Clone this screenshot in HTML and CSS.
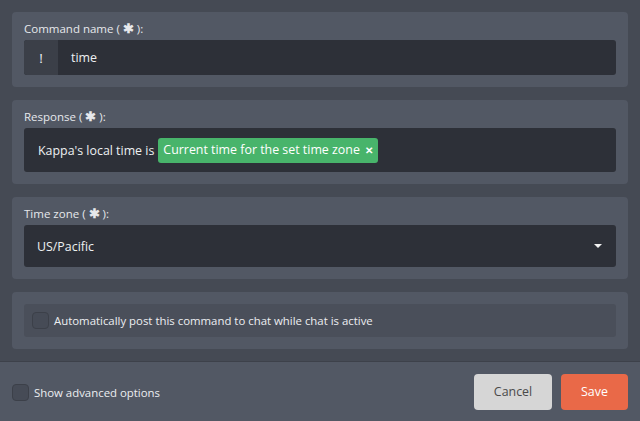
FILE: index.html
```html
<!DOCTYPE html>
<html lang="en">
<head>
  <meta charset="UTF-8" />
  <title>Edit command</title>
  <link rel="stylesheet" href="styles.css">
</head>
<body>

  <!-- FORM -->
  <div class="content">
    <div class="panel">
      <div class="label">Command name ( <span class="req">✱</span> ):</div>
      <div class="input">
        <span class="prefix">!</span>
        <span class="value">time</span>
      </div>
    </div>

    <div class="panel">
      <div class="label">Response ( <span class="req">✱</span> ):</div>
      <div class="input input-tall">
        <span class="value">Kappa's local time is</span>
        <span class="tag">Current time for the set time zone <span class="tag-x">✕</span></span>
      </div>
    </div>

    <div class="panel">
      <div class="label">Time zone ( <span class="req">✱</span> ):</div>
      <div class="input input-select">
        <span class="value">US/Pacific</span>
        <span class="caret"></span>
      </div>
    </div>

    <div class="panel">
      <label class="check-row">
        <span class="checkbox"></span>
        Automatically post this command to chat while chat is active
      </label>
    </div>
  </div>

  <!-- FOOTER -->
  <footer>
    <label class="advanced">
      <span class="checkbox"></span>
      Show advanced options
    </label>
    <div class="buttons">
      <button class="btn btn-cancel">Cancel</button>
      <button class="btn btn-save">Save</button>
    </div>
  </footer>

</body>
</html>
```

FILE: styles.css
```css
* {
  box-sizing: border-box;
}

html, body {
  margin: 0;
  padding: 0;
  height: 100%;
}

body {
  font-family: "Open Sans", "Noto Sans", sans-serif;
  font-size: 12.4px;
  color: #eceef1;
  background: #454a54;
  display: flex;
  flex-direction: column;
}

/* FORM */
.content {
  padding: 12px 12px 0;
  display: flex;
  flex-direction: column;
  gap: 13px;
  flex: 1;
}

.panel {
  background: #525864;
  border-radius: 4px;
  padding: 8px 12px 12px;
}

.label {
  font-size: 11.5px;
  height: 18px;
  line-height: 18px;
  margin-bottom: 2px;
  color: #e6e8ec;
}

.req {
  font-size: 12.5px;
  line-height: 1;
  font-weight: bold;
}

.input {
  display: flex;
  align-items: center;
  height: 35px;
  background: #2d3038;
  border-radius: 3px;
  overflow: hidden;
}

.prefix {
  width: 34px;
  height: 100%;
  display: flex;
  align-items: center;
  justify-content: center;
  background: #3b3f48;
  font-size: 13.5px;
}

.value {
  padding-left: 13px;
  color: #eef0f2;
}

.input-tall {
  height: 44px;
  padding-left: 1px;
}

.tag {
  margin-left: 4px;
  background: #48b46b;
  color: #fff;
  border-radius: 3px;
  padding: 3px 5px 4px 5px;
  line-height: 18px;
}

.tag-x {
  font-size: 10px;
  font-weight: bold;
  margin-left: 2px;
}

.input-select {
  height: 42px;
  justify-content: space-between;
  padding-right: 14px;
}

.caret {
  width: 0;
  height: 0;
  border-left: 4px solid transparent;
  border-right: 4px solid transparent;
  border-top: 4px solid #f2f2f2;
}

.check-row {
  display: flex;
  align-items: center;
  gap: 5px;
  height: 33px;
  padding-left: 8px;
  background: #4a4f5a;
  border-radius: 3px;
  font-size: 11.4px;
  margin-top: 4px;
}

.checkbox {
  width: 17px;
  height: 17px;
  border-radius: 4px;
  background: #464b56;
  border: 1px solid #3c4049;
}

/* FOOTER */
footer {
  margin-top: 12px;
  height: 61px;
  background: #525864;
  border-top: 1px solid #3d414a;
  display: flex;
  align-items: center;
  justify-content: space-between;
  padding: 0 12px;
}

.advanced {
  display: flex;
  align-items: center;
  gap: 5px;
  font-size: 11.4px;
  margin-top: 2px;
}

.buttons {
  display: flex;
  gap: 9px;
}

.btn {
  height: 36px;
  border: none;
  border-radius: 4px;
  font-family: inherit;
  font-size: 12.4px;
}

.btn-cancel {
  width: 78px;
  background: #d6d6d6;
  color: #4a4a4a;
}

.btn-save {
  width: 67px;
  background: #e96948;
  color: #fff;
}
```
